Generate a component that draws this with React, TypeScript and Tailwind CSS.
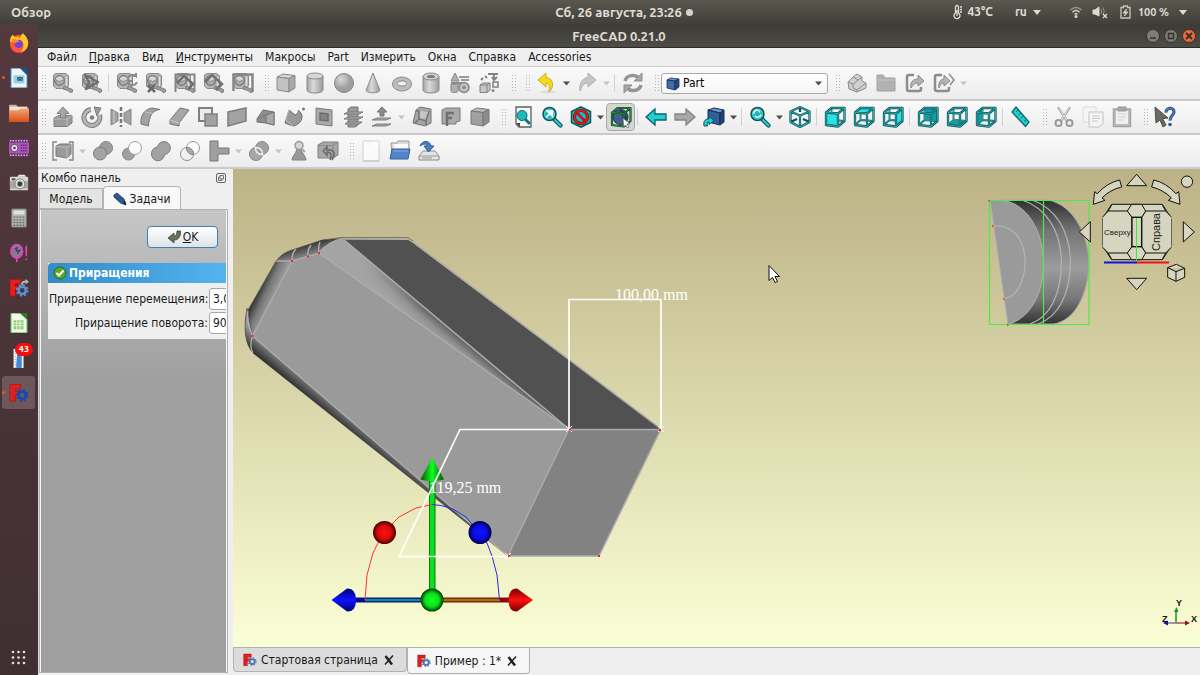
import { ReactNode } from "react";

const Svg = ({ children }: { children: ReactNode }) => (
  <svg className="h-[22px] w-[22px] shrink-0" viewBox="0 0 22 22" fill="none" aria-hidden="true">
    {children}
  </svg>
);

const Handle = () => (
  <svg className="mr-px ml-1 h-[18px] w-[9px] shrink-0 first:ml-0" viewBox="0 0 9 18" aria-hidden="true">
    {[1, 4, 7, 10, 13, 16].map((y) => (
      <g key={y} fill="#b4b4b4">
        <rect x="4" y={y} width="1" height="1" />
        <rect x="7" y={y} width="1" height="1" />
      </g>
    ))}
  </svg>
);

const Separator = () => <span className="mr-[3px] ml-0.5 h-[18px] w-px shrink-0 bg-[#d2d2d2]" />;

const Arrow = ({ dim }: { dim?: boolean }) => (
  <svg className="h-[5px] w-[11px] shrink-0" viewBox="0 0 11 5" aria-hidden="true">
    <path d="M2 .5H9L5.500 4.500Z" fill={dim ? "#c4c4c4" : "#4c4c4c"} />
  </svg>
);

const Tool = ({ label, active, children }: { label: string; active?: boolean; children: ReactNode }) => (
  <button
    type="button"
    aria-label={label}
    className={`flex h-[28px] w-[29px] shrink-0 items-center justify-center rounded-sm ${
      active ? "border border-[#a8a8a8] bg-[#d6d6d6]" : "hover:bg-gray-200"
    }`}>
    <Svg>{children}</Svg>
  </button>
);

const Tape = ({ children }: { children?: ReactNode }) => (
  <>
    <path d="M1.500 3L4 1.500H14L16.500 4V14L13 16.500H4L1.500 14Z" fill="#b6b6b6" stroke="#8a8a8a" />
    <path d="M13 4L16 3.500V14L13 16Z" fill="#dcdcdc" stroke="#8a8a8a" strokeWidth=".8" />
    <circle cx="7.500" cy="8.500" r="5" fill="#999" stroke="#757575" />
    <path d="M3.500 7A4.500 4.500 0 0 1 11.500 7L7.500 9Z" fill="#d6d6d6" />
    <path d="M5 10Q7.500 13 10.500 10" stroke="#c4c4c4" />
    <path d="M12 14L20.500 17.500V20L18 20.500L16 18.500L11 17Z" fill="#9c9c9c" stroke="#808080" />
    {children}
  </>
);

type Face = "front" | "top" | "right" | "rear" | "bottom" | "left";

const facePaths: Record<Face, string> = {
  front: "M2 6.500L14 7.500V20.500L2 19Z",
  top: "M2 6.500L7.500 2H20.500L14 7.500Z",
  right: "M14 7.500L20.500 2V15L14 20.500Z",
  rear: "M7.500 2H20.500V15L7.500 14Z",
  bottom: "M2 19L7.500 14L20.500 15L14 20.500Z",
  left: "M2 6.500L7.500 2V14L2 19Z",
};

const wire = "M2 6.500L14 7.500V20.500L2 19ZM2 6.500L7.500 2H20.500L14 7.500M20.500 2V15L14 20.500";
const innerWire = "M7.500 2V14L2 19M7.500 14L20.500 15";

const ViewCube = ({ face }: { face: Face }) => {
  const behind = face === "rear" || face === "bottom" || face === "left";
  return (
    <>
      <path d={innerWire} stroke="#0c5e62" strokeWidth="1.800" />
      <path d={innerWire} stroke="#38b8bc" strokeWidth=".7" />
      <path d={facePaths[face]} fill={behind ? "#159ca1" : "#2ae0e4"} />
      <path d={wire} stroke="#0c5558" strokeWidth="2.300" strokeLinejoin="round" />
      <path d={wire} stroke="#35c3c7" strokeWidth=".8" />
    </>
  );
};

const Solid = ({ top = "#d4d4d4", front = "#c2c2c2", side = "#a8a8a8", line = "#8a8a8a" }) => (
  <g stroke={line} strokeLinejoin="round">
    <path d="M2 5L8 2L20 3.500L14 6.500Z" fill={top} />
    <path d="M2 5L14 6.500V20L2 18Z" fill={front} />
    <path d="M14 6.500L20 3.500V16L14 20Z" fill={side} />
  </g>
);

const Loupe = ({ children }: { children?: ReactNode }) => (
  <>
    <path d="M12.500 12.500L19.500 19.500" stroke="#0c5558" strokeWidth="4.200" strokeLinecap="round" />
    <path d="M13 13L19.500 19.500" stroke="#22cfd3" strokeWidth="2" strokeLinecap="round" />
    <circle cx="8.500" cy="8" r="6.500" fill="#22b6bb" stroke="#0c5558" strokeWidth="1.500" />
    <circle cx="8.500" cy="8" r="5" stroke="#4fd8db" strokeWidth=".8" />
    {children}
  </>
);

const MeasureTools = () => (
  <>
    <Tool label="Measure linear"><Tape /></Tool>
    <Tool label="Measure angular">
      <Tape><path d="M4 3L17 10L5 17L8 10Z" stroke="#6e6e6e" strokeWidth="2.500" strokeLinejoin="round" /></Tape>
    </Tool>
    <Separator />
    <Tool label="Refresh measure">
      <Tape>
        <path d="M12 6A5 5 0 0 1 20 4V1M20 4H17M13 9H16M13 9V12A5 5 0 0 0 21 10" stroke="#8a8a8a" strokeWidth="2" />
      </Tape>
    </Tool>
    <Tool label="Clear measure">
      <Tape><path d="M3 13L10 20M10 13L3 20" stroke="#6a6a6a" strokeWidth="2.500" /></Tape>
    </Tool>
    <Tool label="Toggle measure">
      <Tape>
        <path d="M1.500 20V2.500H20.500V20" stroke="#858585" strokeWidth="2" />
        <path d="M3 11L10 4L19 12L14 18" stroke="#707070" strokeWidth="2.500" />
      </Tape>
    </Tool>
    <Tool label="Toggle 3D">
      <Tape><path d="M2 10L9 3L19 12L13 18" stroke="#707070" strokeWidth="2.500" /></Tape>
    </Tool>
    <Tool label="Toggle delta">
      <Tape><path d="M1.500 19V2.500H20.500V20" stroke="#858585" strokeWidth="2.500" /></Tape>
    </Tool>
  </>
);

const PrimitiveTools = () => (
  <>
    <Tool label="Box"><Solid /></Tool>
    <Tool label="Cylinder">
      <path d="M3 4V18C3 22 19 22 19 18V4" fill="url(#metal)" stroke="#8a8a8a" />
      <ellipse cx="11" cy="4" rx="8" ry="3" fill="#d6d6d6" stroke="#8a8a8a" />
    </Tool>
    <Tool label="Sphere"><circle cx="11" cy="11" r="9.500" fill="url(#ball)" stroke="#858585" /></Tool>
    <Tool label="Cone">
      <path d="M11 1L18 18.500C16.500 21.500 5.500 21.500 4 18.500Z" fill="url(#metal)" stroke="#8c8c8c" />
    </Tool>
    <Tool label="Torus">
      <ellipse cx="11" cy="12" rx="9.500" ry="7" fill="#bcbcbc" stroke="#8a8a8a" />
      <ellipse cx="11" cy="11.500" rx="4.500" ry="2.500" fill="#f1f1f1" stroke="#8a8a8a" />
    </Tool>
    <Tool label="Tube">
      <path d="M3 4.500V18C3 22 19 22 19 18V4.500" fill="url(#metal)" stroke="#8a8a8a" />
      <ellipse cx="11" cy="4.500" rx="8" ry="3.500" fill="#d0d0d0" stroke="#8a8a8a" />
      <ellipse cx="11" cy="4.500" rx="4" ry="1.500" fill="#7a7a7a" />
    </Tool>
    <Tool label="Primitives">
      <path d="M6 1L10 9H2Z" fill="#b0b0b0" stroke="#858585" />
      <path d="M10 5H20M12 8H20" stroke="#9a9a9a" strokeWidth="2" />
      <path d="M2 12V19C2 21 9 21 9 19V12Z" fill="#b0b0b0" stroke="#858585" />
      <circle cx="15" cy="15.500" r="5" fill="#c2c2c2" stroke="#858585" strokeWidth="1.500" />
      <circle cx="15" cy="15.500" r="1.800" fill="#8a8a8a" />
      <path d="M2 11H13" stroke="#8a8a8a" strokeWidth="2" />
    </Tool>
    <Tool label="Shape builder">
      <path d="M2 13L5 11H12V18L9 20.500H2ZM2 13H9V20.500M9 13L12 11" fill="#c6c6c6" stroke="#808080" />
      <path d="M3 8L5 6M7 4L9 6M10 2H20M16 2V7M14 5L16 8L19 5" stroke="#808080" strokeWidth="1.800" />
      <path d="M15 10H20V15H15Z" stroke="#808080" strokeWidth="1.500" />
      <circle cx="15" cy="18.500" r="1.500" fill="#858585" />
    </Tool>
  </>
);

const PartTools = () => (
  <>
    <Tool label="Extrude">
      <path d="M2 12L7 9.500H20V17L15 20.500H2Z" fill="#9c9c9c" stroke="#7e7e7e" />
      <path d="M2 13H15V20M15 13L20 10" stroke="#bcbcbc" />
      <path d="M11 1L17 7.500H13.500V12H8.500V7.500H5Z" fill="#a6a6a6" stroke="#7e7e7e" />
    </Tool>
    <Tool label="Revolve">
      <path d="M10 3.500A8 8 0 1 0 18.500 9" stroke="#7e7e7e" strokeWidth="5" />
      <path d="M10 3.500A8 8 0 1 0 18.500 9" stroke="#b4b4b4" strokeWidth="3" />
      <path d="M13 1L20 2L16 10Z" fill="#9a9a9a" stroke="#7e7e7e" />
      <circle cx="11" cy="11.500" r="2.200" fill="#808080" />
    </Tool>
    <Tool label="Mirror">
      <path d="M1 3L8 7V15L1 19ZM21 3L14 7V15L21 19Z" fill="#a2a2a2" stroke="#858585" />
      <path d="M11 1V21" stroke="#777" strokeWidth="2.500" strokeDasharray="4 2" />
      <path d="M4 5V17" stroke="#d0d0d0" />
    </Tool>
    <Tool label="Fillet">
      <path d="M2 18C1 9 6 3 13 2L21 3.500C14 4 10 10 9.500 20Z" fill="#a2a2a2" stroke="#777" />
      <path d="M6 6L14 7.500" stroke="#c4c4c4" />
    </Tool>
    <Tool label="Chamfer">
      <path d="M2 14L12 2L21 4L11 17V20L2 18Z" fill="#a6a6a6" stroke="#777" />
      <path d="M2 14L11 17" stroke="#ccc" />
    </Tool>
    <Tool label="Face">
      <path d="M2 2H15V15H2Z" fill="#ececec" stroke="#808080" strokeWidth="2" />
      <path d="M8 8H20V20H8Z" fill="#a2a2a2" stroke="#808080" strokeWidth="1.500" />
    </Tool>
    <Tool label="Ruled surface"><path d="M2 6L20 2V15L2 20Z" fill="#a2a2a2" stroke="#7c7c7c" strokeWidth="1.500" /></Tool>
    <Tool label="Loft">
      <path d="M2 13L8 4L19 6V19L11 17L2 16Z" fill="#8e8e8e" stroke="#707070" />
      <path d="M11 9L19 6V19L11 17Z" fill="#a8a8a8" stroke="#757575" />
      <path d="M2 13L11 9" stroke="#757575" />
    </Tool>
    <Tool label="Sweep">
      <path d="M5 4L11 9C14 8 15 5 14 4L17 7C20 12 16 19 9 20L1 17Z" fill="#999" stroke="#707070" />
      <path d="M5 4L2 14L9 20" stroke="#c0c0c0" />
      <circle cx="19.500" cy="3" r="1.500" fill="#777" />
    </Tool>
    <Tool label="Section">
      <path d="M3 2L19 4V20L3 18Z" fill="#aaa" stroke="#7b7b7b" />
      <path d="M7 7L15 8V15L7 14Z" fill="#858585" stroke="#6c6c6c" strokeWidth="1.500" />
    </Tool>
    <Tool label="Cross sections">
      <path d="M6 3L9 1H16V19L13 21H6Z" fill="#999" stroke="#747474" />
      <path d="M2 8L6 6H21L17 8ZM2 13L6 11H21L17 13ZM3 18L6 16H20L17 18Z" fill="#b2b2b2" stroke="#777" />
    </Tool>
    <Tool label="Offset">
      <path d="M11 1L16 6H13V10H9V6H6Z" fill="#8c8c8c" stroke="#777" />
      <path d="M6 12H20L15 14H1ZM6 18H20L15 20H1Z" fill="#a8a8a8" stroke="#808080" />
    </Tool>
    <Arrow dim />
    <Tool label="Thickness">
      <path d="M5 4L9 1L20 3V17L14 20L2 17Z" fill="#a6a6a6" stroke="#757575" />
      <path d="M5 5L8 5V13L15 15V19M8 13L4 17M15 15L18 5" stroke="#757575" strokeWidth="1.500" />
      <path d="M9 5L17 6L14 13L9 12Z" fill="#c6c6c6" />
    </Tool>
    <Tool label="Projection">
      <path d="M2 4L6 2H20V15L16 16V18H2Z" fill="#aaa" stroke="#7b7b7b" />
      <path d="M7 20V7H14M7 12H12" stroke="#707070" strokeWidth="2.500" />
    </Tool>
    <Tool label="Color per face"><Solid top="#bcbcbc" front="#a0a0a0" side="#8c8c8c" line="#787878" /></Tool>
  </>
);

const ViewTools = () => (
  <>
    <Tool label="Fit all">
      <path d="M4 1H19V21H7L4 18Z" fill="#f7f7f7" stroke="#5c635d" strokeWidth="1.300" />
      <path d="M4 17H8V21Z" fill="#444" />
      <path d="M12 12L17 17" stroke="#087a7f" strokeWidth="3" strokeLinecap="round" />
      <circle cx="10" cy="9.500" r="5" fill="#21b9bd" stroke="#086a6e" />
    </Tool>
    <Tool label="Fit selection">
      <Loupe><path d="M5 11.500L10 6.500M6 5H11.500V10.500Z" fill="#fff" stroke="#fff" strokeWidth="1.500" /></Loupe>
    </Tool>
    <Tool label="Draw style">
      <path d="M11 .8L20.500 5.500V16.500L11 21.200L1.500 16.500V5.500Z" fill="#21b6ba" stroke="#0c5558" strokeWidth="1.500" />
      <circle cx="11" cy="11" r="6.500" stroke="#6e0d0d" strokeWidth="3" />
      <circle cx="11" cy="11" r="6.500" stroke="#df1b1b" strokeWidth="1.800" />
      <path d="M6.500 6.500L15.500 15.500" stroke="#c51515" strokeWidth="2.500" />
    </Tool>
    <Arrow />
    <Tool label="Bounding box" active>
      <circle cx="10.500" cy="11" r="7.500" fill="#3f5f90" stroke="#172b4d" />
      <path d="M9 4A8 8 0 0 1 15 17C12 14 14 9 9 4Z" fill="#223a63" />
      <path d={wire} stroke="#0d4a1a" strokeWidth="2.200" strokeLinejoin="round" />
      <path d={wire} stroke="#2a9a3b" strokeWidth=".9" />
      <path d="M13 12L20 18L17 18L19 21L17.500 22L15.500 19L13.500 21Z" fill="#fff" stroke="#555" strokeWidth=".7" />
    </Tool>
    <Separator />
    <Tool label="Back"><path d="M1 11L10 3V8H21V14H10V19Z" fill="#22cdd2" stroke="#0c6468" strokeWidth="1.300" /></Tool>
    <Tool label="Forward"><path d="M21 11L12 3V8H1V14H12V19Z" fill="#a8a8a8" stroke="#858585" strokeWidth="1.300" /></Tool>
    <Tool label="Link">
      <path d="M5 4L11 2L21 4L17 7Z" fill="#6d96cc" stroke="#172d52" />
      <path d="M5 4L17 7V19L5 16Z" fill="#315f9c" stroke="#172d52" />
      <path d="M17 7L21 4V16L17 19Z" fill="#214579" stroke="#172d52" />
      <path d="M1 20C0 14 3 13 6 13V10.500L11 14.500L6 18.500V16C4.500 16 3.500 17 4.500 20Z" fill="#23cbd0" stroke="#0c5b5f" />
    </Tool>
    <Arrow />
    <Separator />
    <Tool label="Zoom"><Loupe><path d="M5 8A3 3 0 0 1 11 6.500M12 8.500A3.500 3.500 0 0 1 6 10" stroke="#e8ffff" strokeWidth="1.300" /></Loupe></Tool>
    <Arrow />
    <Tool label="Isometric">
      <path d="M11 1L20.500 5.500V16L11 21L1.500 16V5.500ZM1.500 5.500L11 9.500L20.500 5.500M11 9.500V21M1.500 16L8 13M20.500 16L14 13M11 1V6" stroke="#0c5558" strokeWidth="2.200" strokeLinejoin="round" />
      <path d="M11 1L20.500 5.500V16L11 21L1.500 16V5.500ZM1.500 5.500L11 9.500L20.500 5.500M11 9.500V21" stroke="#39bec2" strokeWidth=".8" />
    </Tool>
    <Separator />
    <Tool label="Front"><ViewCube face="front" /></Tool>
    <Tool label="Top"><ViewCube face="top" /></Tool>
    <Tool label="Right"><ViewCube face="right" /></Tool>
    <Separator />
    <Tool label="Rear"><ViewCube face="rear" /></Tool>
    <Tool label="Bottom"><ViewCube face="bottom" /></Tool>
    <Tool label="Left"><ViewCube face="left" /></Tool>
    <Separator />
    <Tool label="Measure distance">
      <path d="M6 1L19 16L15.500 20.500L2 6Z" fill="#23cdd1" stroke="#0c6b6f" strokeWidth="1.300" />
      <path d="M8 4L6 6M11 7L8.500 9M14 10L11 12M17 13L14 15.500" stroke="#0c6b6f" />
    </Tool>
  </>
);

const EditTools = () => (
  <>
    <Tool label="Cut">
      <path d="M5 1L14 15M17 1L8 15" stroke="#b0b0b0" strokeWidth="2.500" />
      <path d="M5.500 1L14 15M16.500 1L8 15" stroke="#ddd" />
      <circle cx="5.500" cy="17" r="3" stroke="#9a9a9a" strokeWidth="2" />
      <circle cx="16.500" cy="17" r="3" stroke="#9a9a9a" strokeWidth="2" />
    </Tool>
    <Tool label="Copy">
      <path d="M1 1H14V16H1Z" fill="#f5f5f5" stroke="#dcdcdc" />
      <path d="M7 6H21V18L17 21H7Z" fill="#f4f4f4" stroke="#c4c4c4" />
      <path d="M10 10H18M10 12.500H18M10 15H16" stroke="#ccc" />
    </Tool>
    <Tool label="Paste">
      <path d="M2.500 3H19.500V20.500H2.500Z" fill="#bdbdbd" stroke="#a4a4a4" strokeWidth="1.500" />
      <path d="M5 5H17V18H5Z" fill="#f0f0f0" />
      <path d="M7 1H15V5H7Z" fill="#a8a8a8" stroke="#999" />
      <path d="M7 8H15M7 11H15M7 14H13" stroke="#d2d2d2" />
    </Tool>
  </>
);

const BooleanTools = () => (
  <>
    <Tool label="Compound">
      <path d="M5 2H1V20H5M17 2H21V20H17" stroke="#858585" strokeWidth="1.400" />
      <path d="M4 6L8 4H19V14L15 18L4 16Z" fill="#9a9a9a" stroke="#777" />
      <path d="M4 6.500L15 7.500V18M15 7.500L19 4.500" stroke="#bcbcbc" />
    </Tool>
    <Arrow dim />
    <Tool label="Boolean">
      <circle cx="14" cy="8" r="6.500" fill="#9e9e9e" stroke="#858585" />
      <circle cx="8" cy="13.500" r="6.500" fill="#a4a4a4" stroke="#7c7c7c" />
    </Tool>
    <Tool label="Difference">
      <circle cx="7.500" cy="14" r="6" fill="#a0a0a0" stroke="#858585" />
      <circle cx="14" cy="8" r="6.500" fill="#fafafa" stroke="#a0a0a0" />
    </Tool>
    <Tool label="Union">
      <path d="M1.500 14A6.500 6.500 0 0 1 7.500 7A6.500 6.500 0 1 1 14.500 14.500A6.500 6.500 0 1 1 1.500 14Z" fill="#a2a2a2" stroke="#7f7f7f" />
    </Tool>
    <Tool label="Intersection">
      <circle cx="14" cy="8" r="6.500" fill="#fafafa" stroke="#999" />
      <circle cx="8" cy="14" r="6.500" stroke="#8c8c8c" />
      <path d="M7.500 7.500A6.500 6.500 0 0 1 14.500 14.500A6.500 6.500 0 0 1 7.500 7.500Z" fill="#aaa" stroke="#888" />
    </Tool>
    <Tool label="Join connect"><path d="M2 1H10V8H21V14H10V21H2Z" fill="#a0a0a0" stroke="#777" /></Tool>
    <Arrow dim />
    <Tool label="Split">
      <circle cx="14" cy="8" r="6.500" fill="#a2a2a2" stroke="#858585" />
      <circle cx="8" cy="14" r="6.500" fill="#a8a8a8" stroke="#808080" />
      <path d="M7.500 7.500A6.500 6.500 0 0 1 14.500 14.500A6.500 6.500 0 0 1 7.500 7.500Z" fill="#999" stroke="#f2f2f2" strokeWidth="1.500" />
    </Tool>
    <Arrow dim />
    <Tool label="Check geometry">
      <path d="M9 9C8 14 4 16 4 20H18C18 16 14 14 13 9Z" fill="#999" stroke="#808080" />
      <circle cx="11" cy="5.500" r="4" fill="#d4d4d4" stroke="#999" strokeWidth="1.500" />
      <path d="M13 8L17 12" stroke="#aaa" strokeWidth="2" />
    </Tool>
    <Tool label="Defeaturing">
      <path d="M1 5L6 2H21V15L16 18H1Z" fill="#a8a8a8" stroke="#808080" />
      <path d="M1 5.500H16V18M16 5.500L21 2" stroke="#8a8a8a" />
      <path d="M6 11L10 7V10C17 9 19 13 15 20M6 11L10 15V12C14 12 15 15 13 20" stroke="#6c6c6c" strokeWidth="1.600" />
    </Tool>
    <Handle />
    <Tool label="New">
      <path d="M3 1H19V21H3Z" fill="#fafafa" stroke="#d0d0d0" />
      <path d="M4 21H19M15 2L18 5" stroke="#bcbcbc" />
      <circle cx="16" cy="4" r="2.500" fill="#fff" />
    </Tool>
    <Tool label="Open">
      <path d="M2 3H8L9 1H20V14H3Z" fill="#dcdcdc" stroke="#999" />
      <path d="M5 4H19V12H5Z" fill="#fafafa" />
      <path d="M3 9H21L19 19H1Z" fill="#5285c4" stroke="#3565a4" />
      <path d="M4 11H19" stroke="#86aadb" />
    </Tool>
    <Tool label="Save">
      <path d="M5 11H17L21 16V20H1V16Z" fill="#e4e4e4" stroke="#8c8c8c" />
      <path d="M1 16H21M4 18H14" stroke="#999" />
      <path d="M2 6C4 0 12 0 13 6H16L10.500 12L6 6H9C8 3 5 4 2 6Z" fill="#4a7ebd" stroke="#2c5b97" />
    </Tool>
  </>
);

const Gear = ({ color, x, y, r }: { color: string; x: number; y: number; r: number }) => (
  <>
    <circle cx={x} cy={y} r={r} stroke={color} strokeWidth={r * 0.7} />
    <circle cx={x} cy={y} r={r * 1.5} stroke={color} strokeWidth={r * 0.45} strokeDasharray={`${r * 0.589} ${r * 0.589}`} />
  </>
);

const FreeCadLogo = ({ gear = "#4d74ad" }: { gear?: string }) => (
  <>
    <path d="M1 1.500H13V6.500H7V9H11V13H7V20H1Z" fill="#e02020" stroke="#99100f" strokeWidth=".6" />
    <Gear color={gear} x={14.500} y={13.500} r={4} />
  </>
);

const dock: { name: string; active?: boolean; running?: boolean; badge?: string; icon: ReactNode }[] = [
  {
    name: "Firefox",
    icon: (
      <>
        <circle cx="11" cy="12" r="10" fill="#ff5a36" />
        <path d="M1 10C1 5 3 3 4 2L7 5C10 3 12 5 11 7L15 0C20 4 23 10 20 16C18 20 13 22 11 22C16 19 17 14 15 10Z" fill="#ffc629" />
        <path d="M2 15C5 22 14 23 18 18C15 24 4 24 2 15Z" fill="#ee2b74" />
        <circle cx="10.500" cy="12" r="4.500" fill="#7b3fd4" />
        <path d="M2 7C6 5 9 8 12 9C9 10 8 11 5 11Z" fill="#ff8a1f" />
      </>
    ),
  },
  {
    name: "LibreOffice Impress",
    running: true,
    icon: (
      <>
        <path d="M2 0H13L20 7V22H2Z" fill="#eef4f7" stroke="#1f6f9a" strokeWidth="1.200" />
        <path d="M12 0H20V8Z" fill="#0d5c8d" />
        <rect x="5" y="8" width="12" height="9" rx="1" fill="#9ecbe4" />
        <path d="M9 10H15V14H9Z" fill="#1c6288" />
        <path d="M10 13L12 11L14 13" stroke="#5fb06a" />
      </>
    ),
  },
  {
    name: "Files",
    icon: (
      <>
        <path d="M0 3Q0 2 1 2H8L10 5H21V20H0Z" fill="#d8a88d" />
        <path d="M1 4H20V14H1Z" fill="#f3e4da" />
        <path d="M0 20V8H10L13 6H22V20Q22 21 21 21H1Q0 21 0 20Z" fill="url(#folder)" />
      </>
    ),
  },
  {
    name: "Video",
    icon: (
      <>
        <rect x="0" y="1" width="22" height="20" rx="1" fill="#5e3566" />
        <path d="M1 3H21M1 19H21" stroke="#dcc8e0" strokeWidth="1.500" strokeDasharray="1.500 1.500" />
        <rect x="0" y="5" width="22" height="12" fill="#b053bd" />
        <circle cx="6" cy="11" r="4" fill="#e6e6e6" stroke="#5c2f66" />
        <circle cx="6" cy="11" r="1.500" fill="#51405a" />
        <path d="M13 8H20M13 11H20M13 14H20" stroke="#5c2f66" strokeWidth="1.500" strokeDasharray="1.500 1" />
      </>
    ),
  },
  {
    name: "Shotwell",
    icon: (
      <>
        <rect x="1" y="4" width="20" height="15" rx="1" fill="#d7d7d3" />
        <path d="M1 9H21V17H1Z" fill="#a6a6a2" />
        <path d="M9 4L11 2H17L19 4Z" fill="#efefef" />
        <circle cx="12" cy="12" r="5.500" fill="#e4e4e4" stroke="#777" />
        <circle cx="12" cy="12" r="3" fill="#35393d" stroke="#aaa" />
        <rect x="3" y="6" width="4" height="2" fill="#444" />
      </>
    ),
  },
  {
    name: "Calculator",
    icon: (
      <>
        <rect x="3" y="1" width="16" height="20" rx="1" fill="#b6b6b2" stroke="#7a7a76" />
        <rect x="5" y="3" width="12" height="4" fill="#dfe4dc" />
        <path d="M5 10H17M5 13H17M5 16H17M5 19H17" stroke="#666" strokeWidth="1.500" strokeDasharray="2 1.300" />
      </>
    ),
  },
  {
    name: "Hints",
    icon: (
      <>
        <ellipse cx="8.500" cy="9" rx="6.500" ry="7.500" fill="#8d7797" stroke="#e83ec0" strokeWidth="1.600" />
        <path d="M8.500 16.500V21M19 3V14M19 17V19" stroke="#e83ec0" strokeWidth="1.800" />
        <path d="M6 7L9 5L8 9L12 8L9 12" stroke="#4b3154" strokeWidth="1.200" />
      </>
    ),
  },
  {
    name: "FreeCAD link",
    icon: (
      <>
        <FreeCadLogo gear="#5b8fd1" />
        <path d="M13 7C14 3 16 3 18 3V1L22 4L18 7V5C16 5 15 6 15 8Z" fill="#b8b8b8" />
      </>
    ),
  },
  {
    name: "LibreOffice Calc",
    icon: (
      <>
        <path d="M2 0H13L20 7V22H2Z" fill="#f3f8ef" stroke="#3c9a2c" strokeWidth="1.200" />
        <path d="M12 0H20V7Z" fill="#2c7d1d" />
        <rect x="5" y="8" width="11" height="10" fill="#8fcf6e" />
        <path d="M5 11H16M5 14H16M8.500 8V18M12 8V18" stroke="#eff8ea" />
      </>
    ),
  },
  {
    name: "Updates",
    badge: "43",
    icon: (
      <>
        <path d="M5 1H16V22H5Z" fill="#f2f2f2" />
        <path d="M9 6H14V22H8V18Z" fill="#4788d6" />
        <path d="M7 3V22" stroke="#999" strokeDasharray="1 2" />
      </>
    ),
  },
  { name: "FreeCAD", active: true, running: true, icon: <FreeCadLogo gear="#1747b5" /> },
];

const menu = ["Файл", "Правка", "Вид", "Инструменты", "Макросы", "Part", "Измерить", "Окна", "Справка", "Accessories"];

const TopBar = () => (
  <header className="grid h-6 grid-cols-[1fr_auto_1fr] items-center bg-gradient-to-b from-[#5a584f] to-[#403f3a] px-[11px] font-[Ubuntu,'Noto_Sans',sans-serif] text-[13px] font-semibold text-[#dfdbd2]">
    <a href="#overview">Обзор</a>
    <span className="flex items-center gap-1 pl-12">
      Сб, 26 августа, 23:26
      <span className="h-[7px] w-[7px] rounded-full bg-[#d5d3cd]" />
    </span>
    <div className="flex items-center justify-end pr-0.5 text-xs">
      <svg className="mr-1 h-4 w-2.5" viewBox="0 0 10 16" fill="none" stroke="#dfdbd2" aria-hidden="true">
        <path d="M2.500 9V3A1.500 1.500 0 0 1 5.500 3V9A3 3 0 1 1 2.500 9ZM4 6V12M7 3H9M7 5.500H9M7 8H9" strokeWidth="1.300" />
      </svg>
      <span className="mr-[22px]">43°C</span>
      <span className="mr-1.5">ru</span>
      <svg className="mr-[29px] h-[5px] w-2" viewBox="0 0 8 5" aria-hidden="true"><path d="M0 0H8L4 5Z" fill="#dfdbd2" /></svg>
      <svg className="mr-2.5 h-3 w-3" viewBox="0 0 12 12" fill="none" stroke="#dfdbd2" strokeWidth="1.400" aria-hidden="true">
        <path d="M.5 4Q6 -1 11.500 4" stroke="#9a978f" />
        <path d="M2.500 6.200Q6 3 9.500 6.200M4.500 8.300Q6 7 7.500 8.300" />
        <circle cx="6" cy="10.500" r=".8" />
      </svg>
      <svg className="mr-3 h-3.5 w-4" viewBox="0 0 16 14" fill="none" stroke="#dfdbd2" aria-hidden="true">
        <path d="M1 5H3L7 2V11L3 9H1Z" fill="#dfdbd2" />
        <path d="M9 4Q10.500 6.500 9 9M11 2.500Q13.500 6.500 11 10" stroke="#99968e" />
        <path d="M11 9L15 13M15 9L11 13" strokeWidth="1.400" />
      </svg>
      <svg className="mr-[7px] h-3.5 w-[11px]" viewBox="0 0 11 14" fill="none" stroke="#c8c5bd" aria-hidden="true">
        <path d="M1 2.500H3.500V1H7.500V2.500H10V13H1Z" strokeWidth="1.300" />
        <path d="M6.500 4L3 8H5.500L4.500 11L8 7H5.500Z" fill="#dfdbd2" />
      </svg>
      <span className="mr-2.5 text-[11px]">100 %</span>
      <svg className="h-[5px] w-2" viewBox="0 0 8 5" aria-hidden="true"><path d="M0 0H8L4 5Z" fill="#dfdbd2" /></svg>
    </div>
  </header>
);

const Dock = () => (
  <nav className="flex w-[38px] shrink-0 flex-col bg-gradient-to-b from-[#54393d] to-[#3f2f33] pt-0.5">
    {dock.map((app) => (
      <button
        key={app.name}
        type="button"
        aria-label={app.name}
        className={`relative mr-[3px] mb-0.5 ml-0.5 flex h-[33px] items-center justify-center rounded-[3px] ${
          app.active ? "bg-[#6d575b]" : ""
        }`}>
        {app.running && <span className="absolute left-0 h-[3px] w-[3px] rounded-full bg-[#e9542a]" />}
        <svg className="h-5 w-5" viewBox="0 0 22 22" fill="none" aria-hidden="true">{app.icon}</svg>
        {app.badge && (
          <span className="absolute top-0.5 right-0.5 rounded-full bg-[#f30d0d] px-1 font-[Ubuntu,'Noto_Sans',sans-serif] text-[9px] leading-[13px] font-bold text-white">
            {app.badge}
          </span>
        )}
      </button>
    ))}
    <button type="button" aria-label="Applications" className="mt-auto mr-0.5 mb-[9px] flex justify-center">
      <svg className="h-[17px] w-[17px]" viewBox="0 0 17 17" fill="#e4dfe0" aria-hidden="true">
        {[3, 8.500, 14].map((x) => [3, 8.500, 14].map((y) => <circle key={`${x}${y}`} cx={x} cy={y} r="1.300" />))}
      </svg>
    </button>
  </nav>
);

const TitleBar = () => (
  <div className="grid h-6 shrink-0 grid-cols-[1fr_auto_1fr] items-center border-b border-[#2b2a27] bg-gradient-to-b from-[#3c3b37] to-[#4e4c46] px-1 font-[Ubuntu,'Noto_Sans',sans-serif] text-[13px] font-bold text-[#dfdbd2]">
    <h1 className="col-start-2">FreeCAD 0.21.0</h1>
    <div className="flex justify-end gap-1">
      {["Minimize", "Maximize", "Close"].map((name) => (
        <button
          key={name}
          type="button"
          aria-label={name}
          className={`h-3.5 w-3.5 rounded-full border border-[#33322e] ${name === "Close" ? "bg-[#ee6a3a]" : "bg-[#7e7c75]"}`}>
          <svg viewBox="0 0 12 12" fill="none" stroke="#33322e" strokeWidth="1.500" aria-hidden="true">
            {name === "Minimize" && <path d="M3 8H9" />}
            {name === "Maximize" && <path d="M3.500 3.500H8.500V8.500H3.500Z" />}
            {name === "Close" && <path d="M3 3L9 9M9 3L3 9" strokeWidth="2" />}
          </svg>
        </button>
      ))}
    </div>
  </div>
);

const toolbar = "flex items-center border-b-2 border-[#cbcbcb] bg-gradient-to-b from-[#fafafa] to-[#ececec]";

const Toolbars = () => (
  <div className="shrink-0">
    <div className={`${toolbar} h-[34px]`}>
      <Handle />
      <MeasureTools />
      <Handle />
      <PrimitiveTools />
      <span className="w-px" />
      <Handle />
      <Handle />
      <Tool label="Undo">
        <ellipse cx="12" cy="20" rx="8" ry="1.500" fill="#dedede" />
        <path d="M2 8L10 1V5.500C17 6 19 14 13 20C14 14 13 11 10 11V15Z" fill="#f3d922" stroke="#cdae10" />
      </Tool>
      <Arrow />
      <Tool label="Redo">
        <path d="M20 8L12 1V5.500C5 6 3 14 4 19C6 13 9 11 12 11V15Z" fill="#c6c6c6" stroke="#b2b2b2" />
      </Tool>
      <Arrow dim />
      <Separator />
      <Tool label="Refresh">
        <path d="M3 9A8 7 0 0 1 17 6M19 13A8 7 0 0 1 5 16" stroke="#959595" strokeWidth="3.500" />
        <path d="M20 1V9H12ZM2 21V13H10Z" fill="#a8a8a8" stroke="#8c8c8c" />
      </Tool>
      <Handle />
      <div className="relative">
        <svg className="pointer-events-none absolute top-1 left-[5px] h-3.5 w-3.5" viewBox="0 0 14 14" stroke="#172d52" strokeWidth=".8" aria-hidden="true">
          <path d="M1 3L5 1L13 2L9 4Z" fill="#7299cc" />
          <path d="M1 3L9 4V13L1 11Z" fill="#3c6dad" />
          <path d="M9 4L13 2V10L9 13Z" fill="#244a80" />
        </svg>
        <select
          aria-label="Workbench"
          className="block h-[21px] w-[167px] appearance-none rounded-[3px] border border-[#a9a9a9] bg-gradient-to-b from-white to-[#f4f4f4] pl-[21px] text-xs text-black">
          <option>Part</option>
        </select>
        <span className="pointer-events-none absolute top-2 right-1 flex"><Arrow /></span>
      </div>
      <Handle />
      <Tool label="Create part">
        <path d="M2 10L7 5L11 2L16 5V9L20 11V16L11 20L3 17Z" fill="#cfcfcf" stroke="#8c8c8c" />
        <path d="M2 10L7 12L16 5M7 12V16L11 18L20 11M11 18V20M7 5L12 8" stroke="#8c8c8c" />
      </Tool>
      <Tool label="Create group">
        <path d="M2 3H8L10 6H20V19H2Z" fill="#b2b2b2" stroke="#a2a2a2" />
        <path d="M2 8H20" stroke="#c6c6c6" />
      </Tool>
      <Tool label="Make link">
        <path d="M10 3H5Q3 3 3 5V17Q3 19 5 19H15Q17 19 17 17V15" stroke="#8c8c8c" strokeWidth="2.500" />
        <path d="M7 16C6 10 9 7 14 7V3L20 9L14 14V11C10 11 9 13 7 16Z" fill="#b4b4b4" stroke="#8a8a8a" />
      </Tool>
      <Tool label="Link actions">
        <path d="M9 3H4Q2 3 2 5V17Q2 19 4 19H14Q16 19 16 17V15" stroke="#8c8c8c" strokeWidth="2.500" />
        <path d="M6 16C5 10 8 7 11 7V3L17 9L11 14V11C8 11 7 13 6 16Z" fill="#b4b4b4" stroke="#8a8a8a" />
        <path d="M16 2L21 8L17 13" stroke="#8a8a8a" strokeWidth="1.500" />
      </Tool>
      <Arrow dim />
    </div>
    <div className={`${toolbar} h-[34px]`}>
      <Handle />
      <PartTools />
      <Handle />
      <ViewTools />
      <Handle />
      <EditTools />
      <Handle />
      <Tool label="What's this?">
        <path d="M1 1L14 12L8.500 12.500L12 19L9 21L6 14L2 17Z" fill="#686b64" stroke="#4b4d48" />
        <path d="M12 6.500C12 1 20 1 20 6C20 9 16 10 16 14.500" stroke="#1d3f6d" strokeWidth="3" />
        <path d="M12 6.500C12 1 20 1 20 6C20 9 16 10 16 14.500" stroke="#4f7eb8" strokeWidth="1.500" />
        <circle cx="16" cy="18.500" r="1.800" fill="#2d568c" />
      </Tool>
    </div>
    <div className={`${toolbar} h-[34px]`}>
      <Handle />
      <BooleanTools />
    </div>
  </div>
);

const Field = ({ id, label, value }: { id: string; label: string; value: string }) => (
  <div className="flex items-center gap-px">
    <label htmlFor={id} className="w-[159px] shrink-0 text-right whitespace-nowrap">
      {label}
    </label>
    <input id={id} defaultValue={value} className="h-[22px] w-24 shrink-0 rounded-[3px] border border-[#a6a6a6] bg-white px-[3px]" />
  </div>
);

const ComboPanel = () => (
  <aside className="flex w-[195px] shrink-0 flex-col border-l border-[#d8d8d8] bg-[#efefef] pr-[5px]">
    <div className="flex h-[17px] items-center justify-between pr-0.5 pl-0.5">
      <h2>Комбо панель</h2>
      <button type="button" aria-label="Float panel">
        <svg className="h-2.5 w-2.5" viewBox="0 0 10 10" fill="none" stroke="#666" aria-hidden="true">
          <rect x=".5" y=".5" width="9" height="9" rx="1.500" />
          <path d="M4 2.500H7.500V6H4ZM4 4H2.500V7.500H6V6" strokeWidth=".9" />
        </svg>
      </button>
    </div>
    <div className="flex items-end">
      <button type="button" className="h-[21px] w-16 border border-[#b4b4b4] bg-[#e4e4e4]">Модель</button>
      <button type="button" className="-mb-px flex h-6 w-[78px] items-center justify-center gap-0.5 rounded-t-sm border border-b-0 border-[#b4b4b4] bg-[#f8f8f8]">
        <svg className="h-3.5 w-3.5" viewBox="0 0 14 14" aria-hidden="true">
          <path d="M1 3L4 1L11 7L13 13L7.500 11L1 5Z" fill="#31588d" stroke="#18335a" strokeWidth=".8" />
          <path d="M10 10L13 13L12 9Z" fill="#111" />
        </svg>
        Задачи
      </button>
    </div>
    <div className="mb-0.5 flex-1 border border-[#b0b0b0] bg-[#f6f6f6] px-px">
      <div className="flex h-full flex-col overflow-hidden bg-[#9f9f9f] bg-[linear-gradient(#c6c6c6,#9f9f9f_170px)] pt-4 pl-[7px]">
        <button
          type="button"
          className="mr-2 flex h-[22px] w-[71px] shrink-0 items-center justify-center gap-0.5 self-end rounded-sm border border-[#3c7fb1] bg-gradient-to-b from-white to-[#dde3e8]">
          <svg className="h-3.5 w-3.5" viewBox="0 0 14 14" aria-hidden="true">
            <path d="M1 8L7 3V6C9 6 10 4 10 1H13.500C14 7 11 10 7 10V13Z" fill="#66715a" stroke="#3d4635" strokeWidth=".8" />
          </svg>
          <span><u>O</u>K</span>
        </button>
        <section className="mt-[15px] w-[260px] bg-[#efefef] pb-[5px]">
          <h3 className="mb-[5px] flex h-5 items-center gap-0.5 rounded-tl-sm bg-[linear-gradient(90deg,#318cc6,#55b3f0_180px)] pl-[5px] font-bold text-white">
            <svg className="h-3.5 w-3.5" viewBox="0 0 14 14" fill="none" aria-hidden="true">
              <circle cx="7" cy="7" r="6" fill="#5da828" stroke="#2f6d0d" />
              <path d="M3.500 7L6 9.500L10.500 4.500" stroke="#fff" strokeWidth="2" />
            </svg>
            Приращения
          </h3>
          <div className="flex flex-col gap-0.5 pl-px">
            <Field id="move-step" label="Приращение перемещения:" value="3,00 mm" />
            <Field id="turn-step" label="Приращение поворота:" value="90,00 °" />
          </div>
        </section>
      </div>
    </div>
  </aside>
);

const Scene = () => (
  <svg className="absolute top-0 left-0 h-[478px] w-[967px]" viewBox="233 169 967 478" fill="none" role="img" aria-label="Model">
    <defs>
      <linearGradient id="bevelTop" gradientUnits="userSpaceOnUse" x1="456" y1="334" x2="440" y2="353">
        <stop stopColor="#606060" /><stop offset=".35" stopColor="#909090" /><stop offset=".75" stopColor="#a8a8a8" /><stop offset="1" stopColor="#a4a4a4" />
      </linearGradient>
      <linearGradient id="bevelFade" gradientUnits="userSpaceOnUse" x1="330" y1="245" x2="420" y2="315">
        <stop stopColor="#a4a4a4" /><stop offset=".3" stopColor="#a4a4a4" /><stop offset="1" stopColor="#a4a4a4" stopOpacity="0" />
      </linearGradient>
      <linearGradient id="bevelLeft" gradientUnits="userSpaceOnUse" x1="260" y1="286" x2="275" y2="293">
        <stop stopColor="#333" /><stop offset=".5" stopColor="#777" /><stop offset="1" stopColor="#999" />
      </linearGradient>
      <linearGradient id="bevelLow" gradientUnits="userSpaceOnUse" x1="300" y1="391" x2="310" y2="379">
        <stop stopColor="#303030" /><stop offset="1" stopColor="#949494" />
      </linearGradient>
      <linearGradient id="bevelCap" gradientUnits="userSpaceOnUse" x1="300" y1="245" x2="304" y2="260">
        <stop stopColor="#303030" /><stop offset="1" stopColor="#9a9a9a" />
      </linearGradient>
      <radialGradient id="red"><stop stopColor="#f11" /><stop offset=".6" stopColor="#d80a0a" /><stop offset="1" stopColor="#4a0000" /></radialGradient>
      <radialGradient id="blue"><stop stopColor="#11f" /><stop offset=".6" stopColor="#0b0be0" /><stop offset="1" stopColor="#000046" /></radialGradient>
      <radialGradient id="green"><stop stopColor="#1f2" /><stop offset=".6" stopColor="#0be01a" /><stop offset="1" stopColor="#003c05" /></radialGradient>
      <linearGradient id="coneRed" x2="0" y2="1"><stop stopColor="#700" /><stop offset=".5" stopColor="#f11" /><stop offset="1" stopColor="#700" /></linearGradient>
      <linearGradient id="coneBlue" x2="0" y2="1"><stop stopColor="#007" /><stop offset=".5" stopColor="#11f" /><stop offset="1" stopColor="#007" /></linearGradient>
      <linearGradient id="coneGreen"><stop stopColor="#050" /><stop offset=".5" stopColor="#1f2" /><stop offset="1" stopColor="#050" /></linearGradient>
    </defs>
    <path d="M276 261L247 312C243 328 245 342 253 353L508 556L252.500 336L292 261Z" fill="url(#bevelLeft)" />
    <path d="M247 308C243 328 245 344 253 353L508 556L252.500 336Z" fill="url(#bevelLow)" stroke="#444" strokeWidth=".6" />
    <path d="M276 261C281 254 287 251 295 249L322 240L343 238L319 253L292 261Z" fill="url(#bevelCap)" />
    <path d="M292 261L319 253L569 429L508 556L252.500 336Z" fill="#9a9a9a" />
    <path d="M319 253C325 245 334 240 343 239L569 429Z" fill="url(#bevelTop)" />
    <path d="M319 253C325 245 334 240 343 239L569 429Z" fill="url(#bevelFade)" />
    <path d="M343 239L409 240L661 429H569Z" fill="#515151" />
    <path d="M569 429H661L599 556H508Z" fill="#828282" />
    <path d="M276 261H292L308 256.500L319 253L569 429M292 261L252.500 336L508 556L569 429" stroke="#adadad" strokeWidth="1.300" />
    <path d="M292 261Q292 252 296 249M308 256.500Q307 250 311 245M319 253Q318 246 320 242M252.500 336Q246 322 248 311M252.500 336Q249 346 253 353" stroke="#b0b0b0" strokeWidth="1.300" />
    <path d="M319 253Q328 242 341 239H408L413 242L661 429L599 556H508M343 239L569 429M569 429.500H661" stroke="#ababab" strokeWidth="1.500" />
    <path d="M276 261L248 310M276 261Q283 252 295 249L322 240L341 237.500H408L413 241" stroke="#4a4a40" strokeWidth=".6" />
    <path d="M291 261H293M307 256.500H309M318 253H320M251.500 336H253.500M598 556H600" stroke="#f22" strokeWidth="2" />
    <path d="M343.500 239H345" stroke="#e06666" />

    <path d="M429.500 480H435V600H429.500Z" fill="#0ae11c" stroke="#077a10" />
    <path d="M354 597.500H422V602.500H354Z" fill="#0a0a8c" />
    <path d="M365 600H421" stroke="#128a8a" strokeWidth="2.500" />
    <path d="M443 597.500H512V602.500H443Z" fill="#8c0a0a" />
    <path d="M443 600H500" stroke="#8a8208" strokeWidth="2.500" />
    <path d="M432 457.500L444 479.500Q432 483 420.500 479.500Z" fill="url(#coneGreen)" />
    <path d="M331.500 600L347 588.500Q356 588 356 600T347 611.500Z" fill="url(#coneBlue)" />
    <path d="M533 600L517 588.500Q508.500 588 508.500 600T517 611.500Z" fill="url(#coneRed)" />
    <path d="M365 600L367 575L373 553L378 543L393 523L399 517L416 508L432 504.500" stroke="#f33" />
    <path d="M499.500 600L497 575L492 556L487 543L471 523L466 517L453 509L441 505.500L432 504.500" stroke="#2b2be0" />
    <circle cx="384.500" cy="532.500" r="11.500" fill="url(#red)" />
    <circle cx="480" cy="532.500" r="11.500" fill="url(#blue)" />
    <circle cx="432" cy="600" r="11.500" fill="url(#green)" />

    <path d="M569 429V299.500H661V429M569 429.500H460L399 556.500H508" stroke="#fff" strokeWidth="1.700" />
    <path d="M566 426L572 432M572 426L566 432M658 426L664 432M664 426L658 432M505 553L511 559M511 553L505 559" stroke="#fff" />
    <path d="M569 429.500H571M659 430H661M508 556H510" stroke="#f22" strokeWidth="2" />
    <g className="font-[Liberation_Serif,serif] text-base" fill="#fff">
      <text x="615" y="300">100,00 mm</text>
      <text x="429" y="493">119,25 mm</text>
    </g>
    <path d="M769 265.500V280.500L772.500 277.500L775 282.500L777.500 281.500L775 276.500H779.500Z" fill="#fff" stroke="#111" />
  </svg>
);

const Navigation = () => (
  <svg className="absolute top-0 right-0 h-[166px] w-[220px]" viewBox="980 169 220 166" fill="none" role="img" aria-label="Navigation cube">
    <defs>
      <linearGradient id="drum" x2="0" y2="1">
        <stop stopColor="#2e2e2e" /><stop offset=".25" stopColor="#757575" /><stop offset=".55" stopColor="#9c9c9c" /><stop offset=".8" stopColor="#777" /><stop offset="1" stopColor="#333" />
      </linearGradient>
    </defs>
    <path d="M1000 200H1048C1074 205 1088 235 1089 263C1088 295 1075 320 1054 324H1008Z" fill="url(#drum)" stroke="#a8a8a8" />
    <path d="M990 200H1001C1028 203 1043 232 1043.500 263C1043 295 1030 318 1008 324.500Z" fill="#9a9a9a" stroke="#b0b0b0" />
    <path d="M1022 200C1047 208 1061 232 1061.500 262C1061 295 1050 317 1030 324M1032 200C1056 208 1070 232 1070.500 262C1070 295 1058 317 1038 324M993 226C1013 224 1025 240 1025 262C1025 284 1014 298 1004 299" stroke="#b2b2b2" strokeWidth="1.300" />
    <path d="M989.500 200.500H1089V324.500H989.500ZM1043.500 200V324" stroke="#4fe84a" strokeWidth="1.200" />
    <path d="M988.500 201H990M992 226H993.500M1003 299H1004.500M1007 325H1008.500" stroke="#f22" strokeWidth="1.500" />
    <g transform="translate(970 165) scale(.3333)" stroke="#111" strokeWidth="3" strokeLinejoin="round" fill="#d6d5c0">
      <path d="M470 62H530L500 28ZM470 340H530L500 374ZM361 170V231L328 201Z" />
      <path d="M640 170V231L673 201Z" />
      <path d="M370 118L374 80L382 86Q412 53 449 45L455 66Q420 74 396 99L405 106Z" />
      <path d="M630 118L626 80L618 86Q588 53 551 45L545 66Q580 74 604 99L595 106Z" />
      <circle cx="651" cy="50" r="17" />
      <path d="M593 308L619 298L644 310V337L618 349L593 337ZM593 308L618 320L644 310M618 320V349" />
      <path d="M398 160L425 118H577L604 160V243L577 284H425L398 243Z" />
      <path d="M398 156L415 138H474L486 157V245L474 264H415L398 247M415 138L425 120M415 264L425 283" />
      <path d="M604 156L587 138H527L515 157V245L527 264H587L604 247M587 138L577 120M587 264L577 283" />
      <path d="M472 138L485 118H515L527 138L515 157H486ZM472 264L486 245H515L527 264L515 284H485Z" />
      <path d="M486 157H515V245H486Z" strokeWidth="4" />
    </g>
    <path d="M1136.500 218V262" stroke="#33ee33" />
    <path d="M1104 262.500H1137" stroke="#1212e6" strokeWidth="2" />
    <path d="M1137 262.500H1169" stroke="#f01212" strokeWidth="2" />
    <g className="font-[Liberation_Sans,sans-serif]" fill="#222">
      <text x="1104" y="235" className="text-[8px]">Сверху</text>
      <text transform="translate(1160 251) rotate(-90)" className="text-[11px]">Справа</text>
    </g>
  </svg>
);

const AxisCross = () => (
  <svg className="absolute right-0 bottom-3 h-[40px] w-[42px]" viewBox="1158 595 42 40" fill="none" aria-hidden="true">
    <path d="M1176 623V611" stroke="#2b8f2b" strokeWidth="1.500" />
    <path d="M1174 612L1176.500 607L1178.500 612Z" fill="#1f8f2b" />
    <path d="M1176 623H1186" stroke="#b05050" strokeWidth="1.500" />
    <path d="M1185 620.500L1190 623L1185 625.500Z" fill="#8c1414" />
    <path d="M1176 623H1168" stroke="#7777b0" strokeWidth="1.500" />
    <path d="M1168 620.500L1163 623L1168 625.500Z" fill="#1414a0" />
    <g className="font-[Liberation_Sans,sans-serif] text-[9px] font-bold" fill="#111">
      <text x="1176" y="606">Y</text>
      <text x="1162" y="622">Z</text>
      <text x="1191" y="622">X</text>
    </g>
  </svg>
);

const DocumentTab = ({ title, active }: { title: string; active?: boolean }) => (
  <div
    className={`flex items-center gap-1 rounded-b-sm border border-t-0 border-[#b2b2b2] pr-2 pl-[9px] ${
      active ? "h-[26px] bg-[#f6f6f6]" : "h-6 bg-[#dcdcdc]"
    }`}>
    <svg className="h-3.5 w-3.5" viewBox="0 0 22 22" fill="none" aria-hidden="true"><FreeCadLogo /></svg>
    <a href="#document">{title}</a>
    <button type="button" aria-label="Close tab" className="mr-1 ml-0.5">
      <svg className="h-2.5 w-2.5" viewBox="0 0 10 10" fill="none" stroke="#222" aria-hidden="true">
        <path d="M1.500 1L8 9.500" strokeWidth="2.500" />
        <path d="M9 .5L1 9.500" strokeWidth="1.500" />
      </svg>
    </button>
  </div>
);

export default function App() {
  return (
    <div className="flex h-screen flex-col overflow-hidden bg-[#efefef] font-['DejaVu_Sans_Condensed','DejaVu_Sans',sans-serif] text-xs leading-[14px] text-[#1a1a1a]">
      <svg className="absolute h-0 w-0" aria-hidden="true">
        <defs>
          <linearGradient id="metal"><stop stopColor="#a4a4a4" /><stop offset=".4" stopColor="#dadada" /><stop offset="1" stopColor="#9a9a9a" /></linearGradient>
          <radialGradient id="ball" cx=".35" cy=".3"><stop stopColor="#d8d8d8" /><stop offset="1" stopColor="#9e9e9e" /></radialGradient>
          <linearGradient id="folder" x2="0" y2="1"><stop stopColor="#f2a578" /><stop offset="1" stopColor="#dc4d16" /></linearGradient>
        </defs>
      </svg>
      <TopBar />
      <div className="flex min-h-0 flex-1">
        <Dock />
        <div className="flex min-w-0 flex-1 flex-col">
          <TitleBar />
          <nav className="flex h-[19px] shrink-0 items-center gap-3 border-b border-[#cfcfcf] bg-[#efefef] px-[9px]">
            {menu.map((item) => (
              <button key={item} type="button">
                {item === "Правка" || item === "Инструменты" ? (
                  <><u>{item[0]}</u>{item.slice(1)}</>
                ) : (
                  item
                )}
              </button>
            ))}
          </nav>
          <Toolbars />
          <div className="flex min-h-0 flex-1">
            <ComboPanel />
            <main className="flex min-w-0 flex-1 flex-col">
              <div className="relative min-h-0 flex-1 overflow-hidden bg-gradient-to-b from-[#bcb286] to-[#fbffd5]">
                <Scene />
                <Navigation />
                <AxisCross />
              </div>
              <div className="flex h-7 items-start border-t border-[#b2b2b2]">
                <DocumentTab title="Стартовая страница" />
                <DocumentTab title="Пример : 1*" active />
              </div>
            </main>
          </div>
        </div>
      </div>
    </div>
  );
}
